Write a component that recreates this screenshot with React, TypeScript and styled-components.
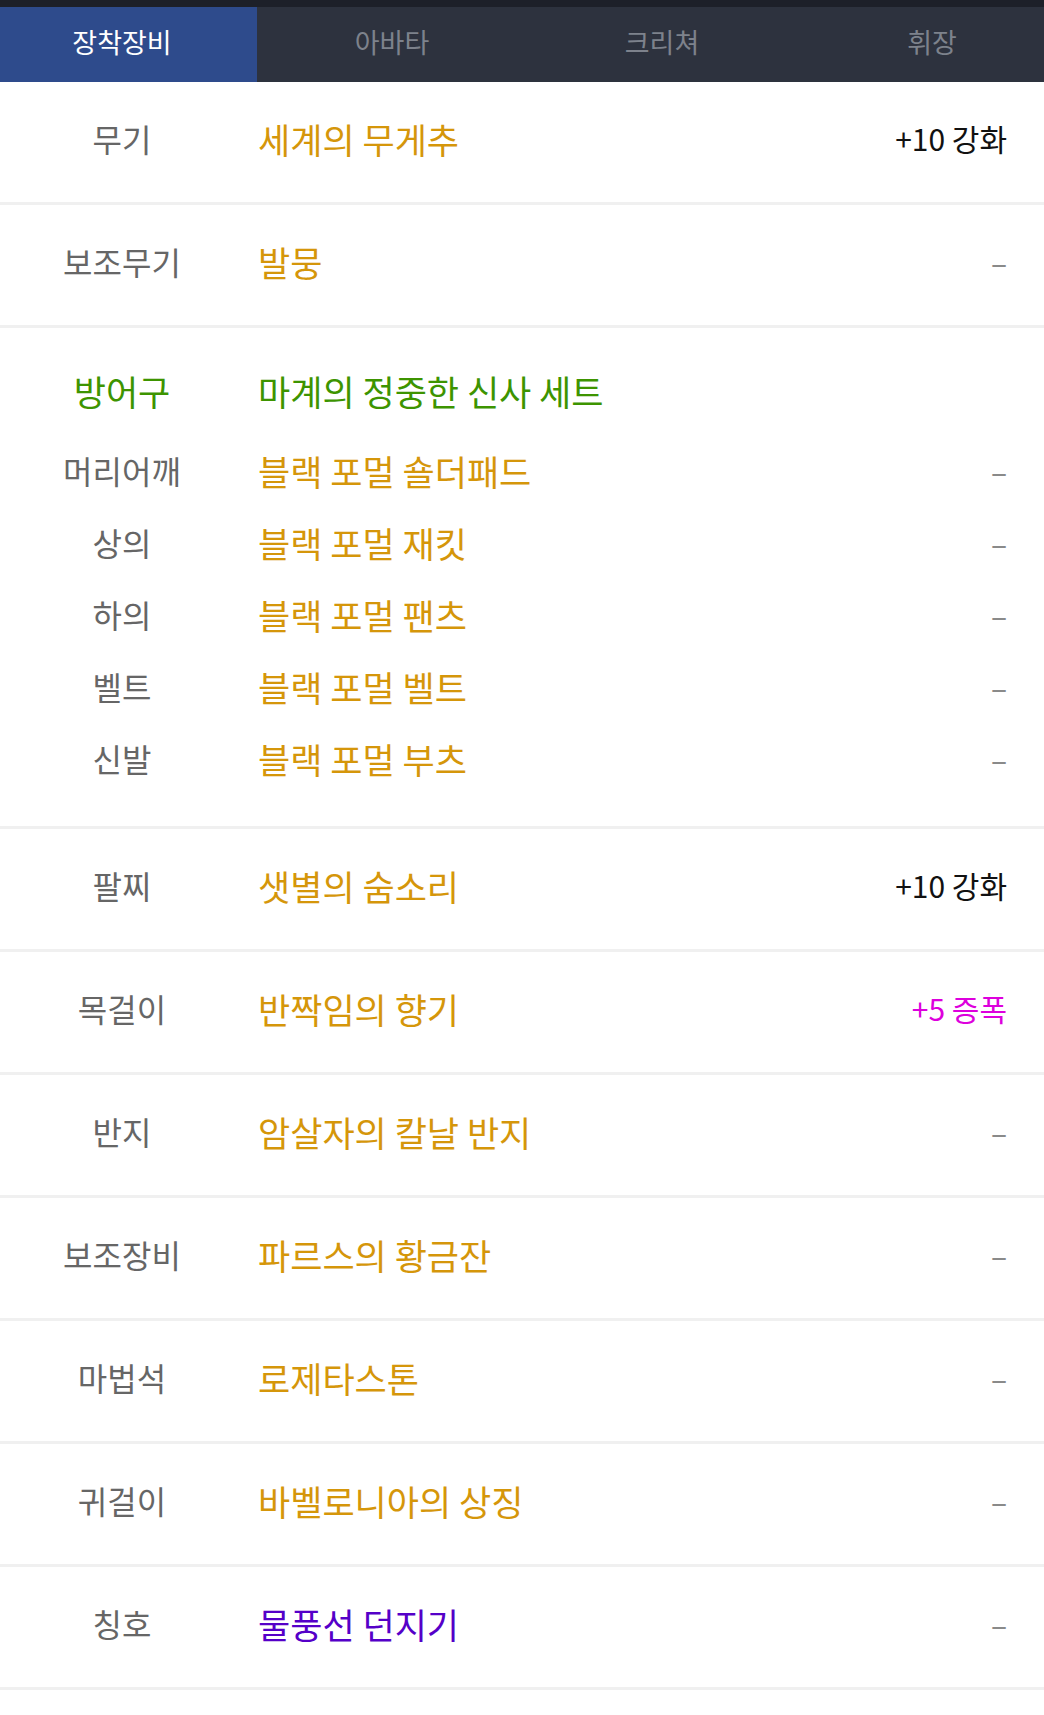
import React from "react";
import styled, { createGlobalStyle } from "styled-components";

const GlobalStyle = createGlobalStyle`
  html, body {
    margin: 0;
    padding: 0;
    background: #ffffff;
  }
  body {
    font-family: "Noto Sans CJK KR", "Noto Sans", sans-serif;
    -webkit-font-smoothing: antialiased;
  }
  * { box-sizing: border-box; }
`;

const Page = styled.div`
  width: 1044px;
  min-height: 1715px;
  background: #ffffff;
  overflow: hidden;
`;

const TopStrip = styled.div`
  height: 7px;
  background: #1d2029;
`;

const TabBar = styled.nav`
  height: 75px;
  background: #2d323e;
  overflow: hidden;
`;

const TabTrack = styled.div`
  display: grid;
  grid-template-columns: repeat(4, 270px);
  margin-left: -13px;
  height: 100%;
`;

const Tab = styled.div<{ $active?: boolean }>`
  display: flex;
  align-items: center;
  justify-content: center;
  height: 100%;
  padding-bottom: 7px;
  font-size: 27px;
  background: ${(p) => (p.$active ? "#2e4b8c" : "transparent")};
  color: ${(p) => (p.$active ? "#ffffff" : "#7d828c")};
`;

const List = styled.div`
  display: flex;
  flex-direction: column;
`;

const Row = styled.div`
  display: grid;
  grid-template-columns: 244px 1fr auto;
  column-gap: 14px;
  align-items: center;
  height: 123px;
  padding-right: 37px;
  padding-bottom: 8px;
  border-bottom: 3px solid #f0f0f0;
`;

const Label = styled.div<{ $color?: string; $size?: number }>`
  text-align: center;
  font-size: ${(p) => p.$size ?? 32}px;
  color: ${(p) => p.$color ?? "#666666"};
  white-space: nowrap;
`;

const Name = styled.div<{ $color?: string }>`
  font-size: 35px;
  color: ${(p) => p.$color ?? "#d5960a"};
  white-space: nowrap;
`;

const Value = styled.div<{ $color?: string }>`
  font-size: 30px;
  color: ${(p) => p.$color ?? "#111111"};
  white-space: nowrap;
  text-align: right;
`;

const Dash = styled.div`
  font-size: 30px;
  color: #8a8a8a;
  text-align: right;
`;

const SetSection = styled.div`
  display: flex;
  flex-direction: column;
  padding: 37px 37px 32px 0;
  border-bottom: 3px solid #f0f0f0;
`;

const SetHeader = styled.div`
  display: grid;
  grid-template-columns: 244px 1fr;
  column-gap: 14px;
  align-items: center;
  height: 40px;
  margin-bottom: 29px;
`;

const SubRow = styled.div`
  display: grid;
  grid-template-columns: 244px 1fr auto;
  column-gap: 14px;
  align-items: center;
  height: 72px;
`;

type Item = { label: string; name: string; value?: string; valueColor?: string; nameColor?: string };

const before: Item[] = [
  { label: "무기", name: "세계의 무게추", value: "+10 강화" },
  { label: "보조무기", name: "발뭉" },
];

const setParts: Item[] = [
  { label: "머리어깨", name: "블랙 포멀 숄더패드" },
  { label: "상의", name: "블랙 포멀 재킷" },
  { label: "하의", name: "블랙 포멀 팬츠" },
  { label: "벨트", name: "블랙 포멀 벨트" },
  { label: "신발", name: "블랙 포멀 부츠" },
];

const after: Item[] = [
  { label: "팔찌", name: "샛별의 숨소리", value: "+10 강화" },
  { label: "목걸이", name: "반짝임의 향기", value: "+5 증폭", valueColor: "#dd00dd" },
  { label: "반지", name: "암살자의 칼날 반지" },
  { label: "보조장비", name: "파르스의 황금잔" },
  { label: "마법석", name: "로제타스톤" },
  { label: "귀걸이", name: "바벨로니아의 상징" },
  { label: "칭호", name: "물풍선 던지기", nameColor: "#5500c8" },
];

const ItemRow = ({ item }: { item: Item }) => (
  <Row>
    <Label>{item.label}</Label>
    <Name $color={item.nameColor}>{item.name}</Name>
    {item.value ? <Value $color={item.valueColor}>{item.value}</Value> : <Dash>–</Dash>}
  </Row>
);

const tabs = ["장착장비", "아바타", "크리쳐", "휘장"];

export default function App() {
  return (
    <Page>
      <GlobalStyle />
      <TopStrip />
      <TabBar>
        <TabTrack>
          {tabs.map((t, i) => (
            <Tab key={t} $active={i === 0}>
              {t}
            </Tab>
          ))}
        </TabTrack>
      </TabBar>
      <List>
        {before.map((it) => (
          <ItemRow key={it.label} item={it} />
        ))}
        <SetSection>
          <SetHeader>
            <Label $color="#3d9400" $size={35}>방어구</Label>
            <Name $color="#3d9400">마계의 정중한 신사 세트</Name>
          </SetHeader>
          {setParts.map((it) => (
            <SubRow key={it.label}>
              <Label>{it.label}</Label>
              <Name>{it.name}</Name>
              <Dash>–</Dash>
            </SubRow>
          ))}
        </SetSection>
        {after.map((it) => (
          <ItemRow key={it.label} item={it} />
        ))}
      </List>
    </Page>
  );
}
